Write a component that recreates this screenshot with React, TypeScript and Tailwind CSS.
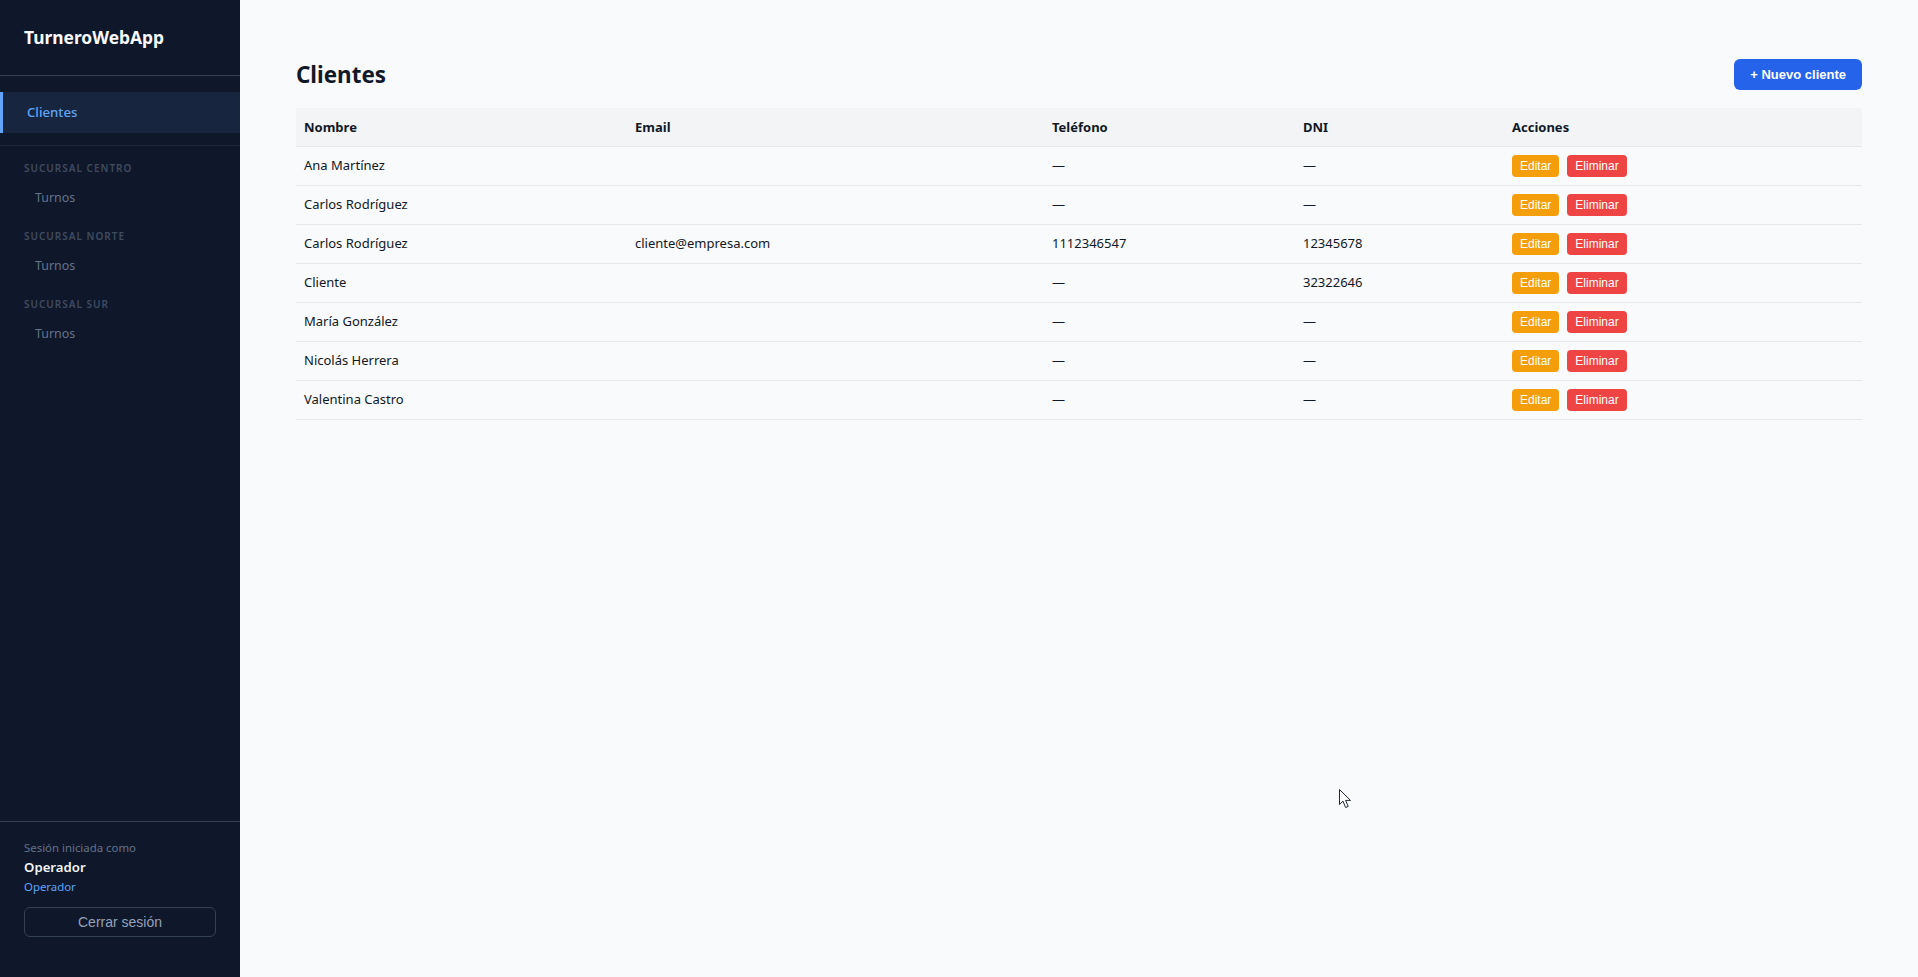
const FONT = 'font-["Noto_Sans",sans-serif]';

const CLIENTES = [
  { nombre: 'Ana Martínez', email: '', telefono: '—', dni: '—' },
  { nombre: 'Carlos Rodríguez', email: '', telefono: '—', dni: '—' },
  { nombre: 'Carlos Rodríguez', email: 'cliente@empresa.com', telefono: '1112346547', dni: '12345678' },
  { nombre: 'Cliente', email: '', telefono: '—', dni: '32322646' },
  { nombre: 'María González', email: '', telefono: '—', dni: '—' },
  { nombre: 'Nicolás Herrera', email: '', telefono: '—', dni: '—' },
  { nombre: 'Valentina Castro', email: '', telefono: '—', dni: '—' },
];

const SUCURSALES = ['Sucursal Centro', 'Sucursal Norte', 'Sucursal Sur'];

function Sidebar() {
  return (
    <aside className="flex w-[240px] shrink-0 flex-col bg-[#0f172a]">
      <div className="h-[76px] border-b border-[#334155] pl-6 pt-[25px] text-[17.4px] leading-[24px] font-bold text-[#f8fafc]">
        TurneroWebApp
      </div>
      <nav className="flex-1 pt-4">
        <a className="flex h-[41px] items-center border-l-[3px] border-[#60a5fa] bg-[#17253f] pl-6 text-[13.2px] font-medium text-[#60a5fa]">
          Clientes
        </a>
        <div className="mt-3 mb-[12px] border-t border-[#1e293b]" />
        {SUCURSALES.map((sucursal) => (
          <div key={sucursal} className="mb-[10px]">
            <p className="pl-6 text-[10px] leading-[20px] font-semibold tracking-[0.1em] text-[#3f4c60] uppercase">
              {sucursal}
            </p>
            <a className="mt-[1px] block pl-[35px] text-[12.4px] leading-[37px] text-[#64748b]">Turnos</a>
          </div>
        ))}
      </nav>
      <div className="h-[156px] border-t border-[#334155] px-6 pt-[16px]">
        <p className="text-[11.4px] leading-[20px] text-[#64748b]">Sesión iniciada como</p>
        <p className="text-[13.2px] leading-[19px] font-semibold text-[#f1f5f9]">Operador</p>
        <p className="text-[11.4px] leading-[20px] text-[#60a5fa]">Operador</p>
        <button className="mt-[10px] h-[30px] w-full rounded-md border border-[#334155] font-['Liberation_Sans',sans-serif] text-[14px] text-[#94a3b8]">
          Cerrar sesión
        </button>
      </div>
    </aside>
  );
}

function ClientesTable() {
  return (
    <table className="w-full table-fixed border-collapse text-[13px] text-[#111827]">
      <colgroup>
        <col className="w-[331px]" />
        <col className="w-[417px]" />
        <col className="w-[251px]" />
        <col className="w-[209px]" />
        <col />
      </colgroup>
      <thead>
        <tr className="h-[38px] border-b border-[#e5e7eb] bg-[#f3f4f6] text-left">
          <th className="px-2 pt-px font-bold">Nombre</th>
          <th className="px-2 pt-px font-bold">Email</th>
          <th className="px-2 pt-px font-bold">Teléfono</th>
          <th className="px-2 pt-px font-bold">DNI</th>
          <th className="px-2 pt-px font-bold">Acciones</th>
        </tr>
      </thead>
      <tbody>
        {CLIENTES.map((cliente, i) => (
          <tr key={i} className="h-[39px] border-b border-[#e5e7eb]">
            <td className="px-2 pt-px">{cliente.nombre}</td>
            <td className="px-2 pt-px">{cliente.email}</td>
            <td className="px-2 pt-px">{cliente.telefono}</td>
            <td className="px-2 pt-px">{cliente.dni}</td>
            <td className="px-2">
              <div className="flex gap-2 font-['Liberation_Sans',sans-serif] text-[12px] text-white">
                <button className="h-[22px] rounded bg-[#f59e0b] px-2">Editar</button>
                <button className="h-[22px] rounded bg-[#ef4444] px-2">Eliminar</button>
              </div>
            </td>
          </tr>
        ))}
      </tbody>
    </table>
  );
}

export default function App() {
  return (
    <div className={`relative flex h-screen overflow-hidden bg-[#f9fafb] ${FONT}`}>
      <Sidebar />
      <main className="flex-1 px-14 pt-[59px]">
        <div className="mb-[17px] flex h-[32px] items-center justify-between">
          <h1 className="text-[22.4px] font-bold text-[#111827]">Clientes</h1>
          <button className="h-[31px] self-start rounded-md bg-[#2563eb] px-4 font-['Liberation_Sans',sans-serif] text-[13px] font-semibold text-white">
            + Nuevo cliente
          </button>
        </div>
        <ClientesTable />
      </main>
      <svg className="absolute top-[788px] left-[1338px]" width="14" height="22" viewBox="0 0 14 22">
        <path
          d="M1.5 1.5V16.5L5 13.2L7.6 19.5L10.2 18.4L7.6 12.4H12.5Z"
          fill="#fff"
          stroke="#1f2937"
          strokeWidth="1"
        />
      </svg>
    </div>
  );
}
